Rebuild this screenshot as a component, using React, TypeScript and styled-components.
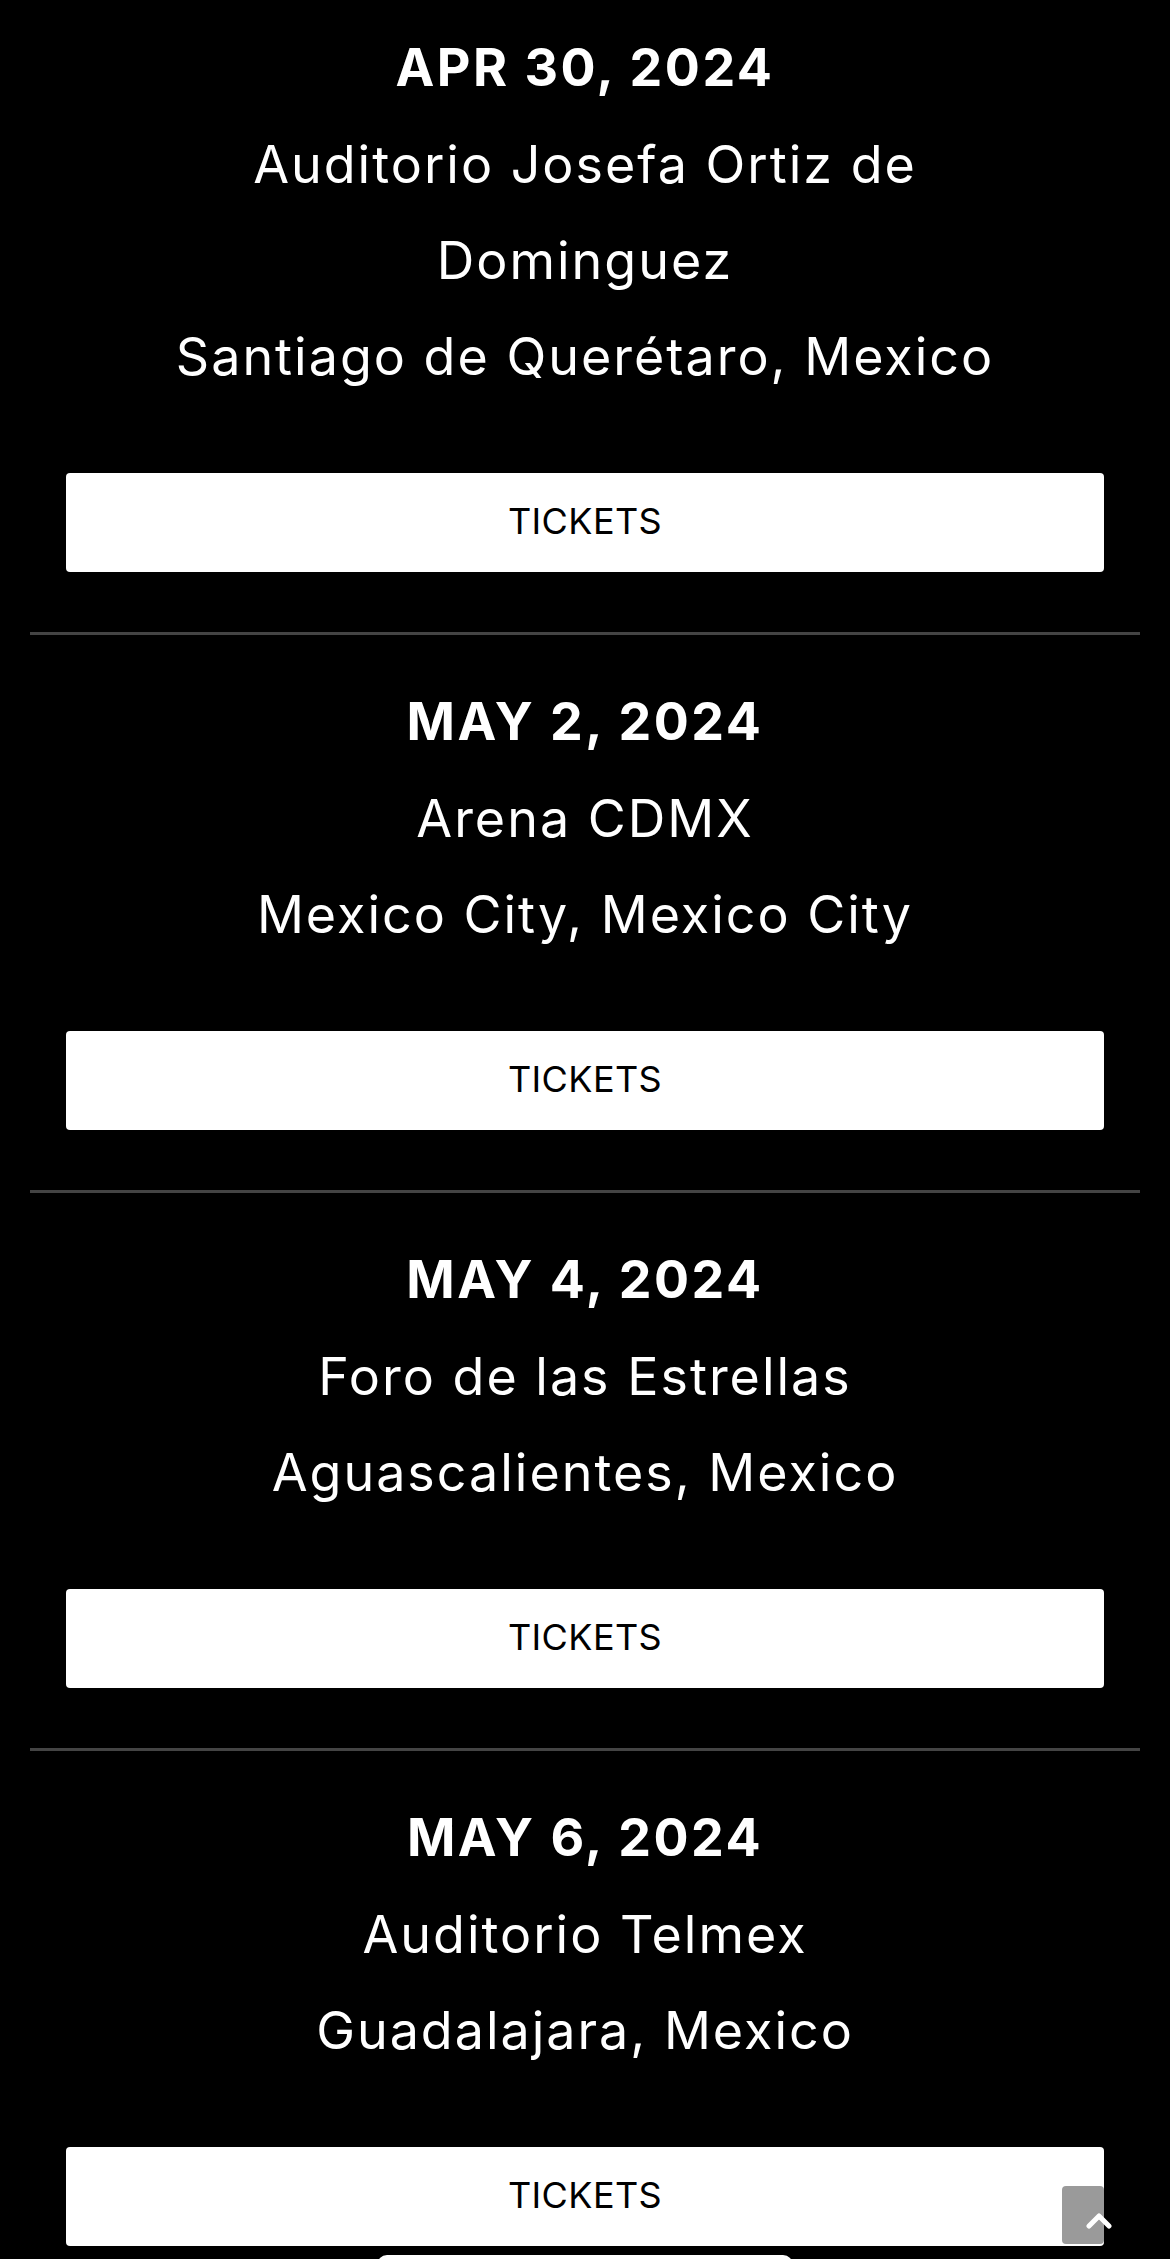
import React from 'react';
import styled, { createGlobalStyle } from 'styled-components';

const GlobalStyle = createGlobalStyle`
  html, body {
    margin: 0;
    padding: 0;
    background: #000;
  }
  body {
    font-family: Inter, 'Liberation Sans', sans-serif;
    color: #fff;
  }
`;

const shows = [
  {
    date: 'APR 30, 2024',
    venue: 'Auditorio Josefa Ortiz de Dominguez',
    city: 'Santiago de Querétaro, Mexico',
  },
  {
    date: 'MAY 2, 2024',
    venue: 'Arena CDMX',
    city: 'Mexico City, Mexico City',
  },
  {
    date: 'MAY 4, 2024',
    venue: 'Foro de las Estrellas',
    city: 'Aguascalientes, Mexico',
  },
  {
    date: 'MAY 6, 2024',
    venue: 'Auditorio Telmex',
    city: 'Guadalajara, Mexico',
  },
];

const App = () => {
  return (
    <>
      <GlobalStyle />
      <TourList>
        {shows.map((show, i) => (
          <ShowRow key={show.date} $first={i === 0}>
            <ShowInfo>
              <ShowDate>{show.date}</ShowDate>
              <ShowLine>{show.venue}</ShowLine>
              <ShowLine>{show.city}</ShowLine>
            </ShowInfo>
            <TicketButton href="#">TICKETS</TicketButton>
          </ShowRow>
        ))}
      </TourList>
      <BottomBar />
      <ScrollTop aria-label="Back to top">
        <svg width="26" height="18" viewBox="0 0 26 18">
          <polyline
            points="3,15 13,5 23,15"
            fill="none"
            stroke="#fff"
            strokeWidth="5"
            strokeLinecap="round"
            strokeLinejoin="round"
          />
        </svg>
      </ScrollTop>
    </>
  );
};

export default App;

const TourList = styled.main`
  display: flex;
  flex-direction: column;
  padding: 0 30px;
`;

const ShowRow = styled.section<{ $first?: boolean }>`
  display: flex;
  flex-direction: column;
  align-items: stretch;
  gap: 68px;
  padding: ${(p) => (p.$first ? '19px' : '38px')} 36px 60px;
  border-bottom: 3px solid #444;
`;

const ShowInfo = styled.div`
  display: flex;
  flex-direction: column;
  align-items: center;
  text-align: center;
  max-width: 900px;
  margin: 0 auto;
`;

const ShowDate = styled.h2`
  margin: 0;
  font-size: 52px;
  font-weight: 700;
  line-height: 98px;
  letter-spacing: 2.5px;
`;

const ShowLine = styled.p`
  margin: 0;
  font-size: 52px;
  font-weight: 400;
  line-height: 96px;
  letter-spacing: 2px;
`;

const TicketButton = styled.a`
  display: flex;
  align-items: center;
  justify-content: center;
  height: 99px;
  padding-bottom: 3px;
  box-sizing: border-box;
  background: #fff;
  border-radius: 4px;
  color: #000;
  font-size: 36px;
  font-weight: 400;
  letter-spacing: 0.4px;
  text-decoration: none;
`;

const BottomBar = styled.div`
  position: fixed;
  left: 377px;
  width: 416px;
  bottom: -36px;
  height: 40px;
  background: #fff;
  border-radius: 10px;
`;

const ScrollTop = styled.button`
  position: fixed;
  right: 66px;
  bottom: 15px;
  width: 42px;
  height: 58px;
  padding: 0;
  border: 0;
  border-radius: 4px;
  background: #9a9a9a;
  cursor: pointer;

  svg {
    position: absolute;
    left: 24px;
    top: 25px;
  }
`;
